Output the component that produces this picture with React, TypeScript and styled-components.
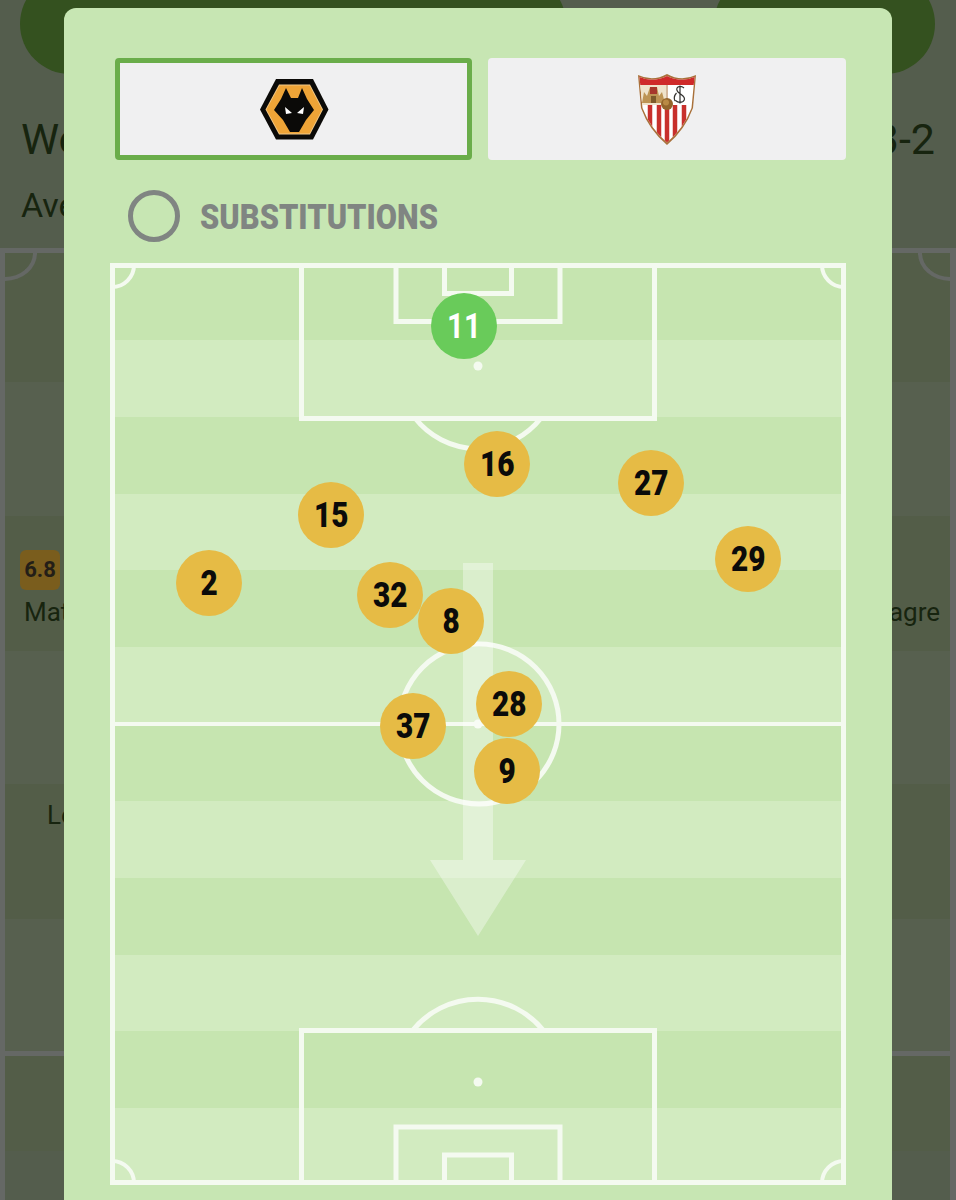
import React from "react";
import styled, { createGlobalStyle } from "styled-components";

const Global = createGlobalStyle`
  html, body { margin: 0; padding: 0; background: #545d4d; }
  body { font-family: Roboto, "Liberation Sans", sans-serif; }
`;

const Screen = styled.div`
  position: relative;
  width: 956px;
  height: 1200px;
  overflow: hidden;
  background: #545d4d;
`;

const TopBar = styled.div`
  display: flex;
  justify-content: space-between;
  height: 74px;
  padding: 0 21px 0 20px;
`;

const Pill = styled.div<{ $w: number }>`
  width: ${(p) => p.$w}px;
  height: 100px;
  margin-top: -26px;
  border-radius: 50px;
  background: #34511f;
`;

const TitleRow = styled.div`
  display: flex;
  justify-content: space-between;
  margin-top: 39px;
  padding: 0 21px;
  color: #17240f;
  font-size: 43px;
  line-height: 52px;
`;

const SubTitle = styled.div`
  width: 80px;
  margin-top: 20px;
  margin-left: 21px;
  overflow: hidden;
  white-space: nowrap;
  color: #17240f;
  font-size: 34px;
  line-height: 40px;
`;

const BackPitch = styled.div`
  position: relative;
  margin-top: 23px;
  height: 960px;
  display: flex;
  flex-direction: column;
  border: solid #656865;
  border-width: 5px 6px 0 5px;
  box-sizing: border-box;
`;

const BackCorner = styled.span<{ $right?: boolean }>`
  position: absolute;
  top: 0;
  ${(p) => (p.$right ? "right: 0;" : "left: 0;")}
  width: 32px;
  height: 28px;
  box-sizing: border-box;
  border: solid #656865;
  border-width: ${(p) => (p.$right ? "0 0 4px 4px" : "0 4px 4px 0")};
  ${(p) => (p.$right ? "border-bottom-left-radius: 100%;" : "border-bottom-right-radius: 100%;")}
`;

const BackStripe = styled.div<{ $h: number; $light?: boolean; $line?: boolean }>`
  height: ${(p) => p.$h}px;
  flex: none;
  box-sizing: border-box;
  background: ${(p) => (p.$light ? "#57604f" : "#535d48")};
  ${(p) => (p.$line ? "border-top: 5px solid #656865;" : "")}
  display: flex;
  justify-content: space-between;
  padding: 0 10px 0 15px;
  color: #17240f;
  font-size: 26px;
  line-height: 30px;
`;

const Rating = styled.div`
  width: 40px;
  height: 40px;
  border-radius: 6px;
  background: #7a5d1d;
  color: #241e17;
  font-weight: 700;
  font-size: 22px;
  line-height: 40px;
  text-align: center;
`;

const BackName = styled.div<{ $top: number; $left: number }>`
  margin-top: ${(p) => p.$top}px;
  margin-left: ${(p) => p.$left}px;
  white-space: nowrap;
`;

const RatedPlayer = styled.div`
  margin-top: 34px;
`;

const Modal = styled.div`
  position: absolute;
  top: 8px;
  left: 64px;
  width: 828px;
  height: 1230px;
  box-sizing: border-box;
  padding: 50px 46px 0;
  background: #c7e6b3;
  border-radius: 12px;
`;

const Tabs = styled.div`
  display: grid;
  grid-template-columns: 357px 358px;
  gap: 16px;
  margin-left: 5px;
`;

const Tab = styled.div<{ $active?: boolean }>`
  height: 102px;
  box-sizing: border-box;
  display: flex;
  align-items: center;
  justify-content: center;
  background: #f0f0f1;
  border-radius: 4px;
  border: ${(p) => (p.$active ? "5px solid #6aad4a" : "none")};
`;

const SubRow = styled.div`
  display: flex;
  align-items: center;
  gap: 20px;
  height: 52px;
  margin: 30px 0 0 18px;
`;

const Radio = styled.div`
  width: 52px;
  height: 52px;
  box-sizing: border-box;
  border: 5px solid #808582;
  border-radius: 50%;
`;

const SubLabel = styled.span`
  display: inline-block;
  margin-top: 3px;
  color: #808582;
  font-weight: 900;
  font-size: 35px;
  line-height: 40px;
  transform: scaleX(0.88);
  transform-origin: left center;
  white-space: nowrap;
`;

const Pitch = styled.div`
  position: relative;
  width: 736px;
  height: 922px;
  margin-top: 21px;
  display: grid;
  grid-template-rows: repeat(12, 1fr);
`;

const Stripe = styled.div<{ $light: boolean }>`
  background: ${(p) => (p.$light ? "#d2ebc0" : "#c6e5b0")};
`;

const Lines = styled.svg`
  position: absolute;
  inset: 0;
  width: 736px;
  height: 922px;
`;

const Player = styled.div<{ $x: number; $y: number; $sub?: boolean }>`
  position: absolute;
  left: ${(p) => p.$x - 110 - 33}px;
  top: ${(p) => p.$y - 263 - 33}px;
  width: 66px;
  height: 66px;
  border-radius: 50%;
  background: ${(p) => (p.$sub ? "#69cb5a" : "#e6bb45")};
  color: ${(p) => (p.$sub ? "#ffffff" : "#0b0b0a")};
  font-weight: ${(p) => (p.$sub ? 700 : 900)};
  display: flex;
  align-items: center;
  justify-content: center;
`;

const Num = styled.span`
  display: inline-block;
  font-size: 35px;
  line-height: 1;
  transform: scaleX(0.85);
`;

const players = [
  { n: 16, x: 497, y: 464 },
  { n: 27, x: 651, y: 483 },
  { n: 15, x: 331, y: 515 },
  { n: 29, x: 748, y: 559 },
  { n: 2, x: 209, y: 583 },
  { n: 32, x: 390, y: 595 },
  { n: 8, x: 451, y: 621 },
  { n: 28, x: 509, y: 704 },
  { n: 37, x: 413, y: 726 },
  { n: 9, x: 507, y: 771 },
];

const WolvesLogo = () => (
  <svg width="70" height="62" viewBox="19 8 70 62">
    <polygon points="20,39.5 36,9 73,9 88.5,39.5 73,69.5 36,69.5" fill="#0b0a08" />
    <polygon points="25.5,39.5 39,14.5 70,14.5 83,39.5 70,64.5 39,64.5" fill="#f2c988" />
    <polygon points="26.5,39.5 39.5,15.5 69.5,15.5 82,39.5 69.5,63.5 39.5,63.5" fill="#eea437" />
    <path d="M46 18 L51 28 L58 28 L62 18 L67 29 L74 40 L66 50 L59 62 L50 62 L43 50 L34 40 L41 29 Z" fill="#0b0a08" />
    <path d="M45 37 L52 43 L46 44 Z M64 37 L57 43 L63 44 Z" fill="#fff" />
  </svg>
);

const SevillaLogo = () => (
  <svg width="60" height="72" viewBox="37 23 60 72">
    <defs>
      <clipPath id="crest">
        <path d="M39.5 27 Q53 33 67 26 Q81 33 94.5 27 L91.5 58 Q84 78 67 92.5 Q50 78 42.5 58 Z" />
      </clipPath>
    </defs>
    <path d="M38 25 Q53 32 67 24 Q81 32 96 25 L93 58 Q85 80 67 95 Q49 80 41 58 Z" fill="#a9713b" />
    <g clipPath="url(#crest)">
      <rect x="37" y="25" width="60" height="72" fill="#fff" />
      <rect x="37" y="25" width="60" height="10" fill="#cf2a2a" />
      <rect x="40" y="35" width="26" height="20" fill="#efe3cb" />
      {[50, 59, 67, 75, 84].map((x) => (
        <rect key={x} x={x - 2.25} y="55" width="4.5" height="42" fill="#c8302c" />
      ))}
    </g>
    <line x1="67" y1="35" x2="67" y2="55" stroke="#a9713b" strokeWidth="1" />
    <path d="M42 53 L44 42 L47 46 L50 37 L57 37 L59 46 L62 42 L65 53 Z" fill="#bd9454" />
    <rect x="50" y="37" width="7" height="7" fill="#a6372c" />
    <rect x="51" y="46" width="5" height="7" fill="#7c5a2a" />
    <path d="M84 38 Q81 35.5 78 37 Q75.5 39 78 42 L83 46 Q86 49 83 51.5 Q79 53.5 75.5 50.5 M80 35.5 L80 53.5 M76.5 43 Q73 47 75 51" fill="none" stroke="#33312f" strokeWidth="1.2" />
    <circle cx="67" cy="54" r="6" fill="#93652a" />
    <circle cx="66" cy="52.5" r="3" fill="#b98a44" />
  </svg>
);

export default function App() {
  return (
    <>
      <Global />
      <Screen>
        <TopBar>
          <Pill $w={546} />
          <Pill $w={221} />
        </TopBar>
        <TitleRow>
          <span>Wolves</span>
          <span>5-3-2</span>
        </TitleRow>
        <SubTitle>Average positions</SubTitle>
        <BackPitch>
          <BackStripe $h={129} />
          <BackStripe $h={134} $light />
          <BackStripe $h={135}>
            <RatedPlayer>
              <Rating>6.8</Rating>
              <BackName $top={7} $left={4}>Matt Doherty</BackName>
            </RatedPlayer>
            <BackName $top={81} $left={0}>Vinagre</BackName>
          </BackStripe>
          <BackStripe $h={133} $light />
          <BackStripe $h={135}>
            <BackName $top={16} $left={27}>Leander Dendoncker</BackName>
          </BackStripe>
          <BackStripe $h={132} $light />
          <BackStripe $h={100} $line />
          <BackCorner />
          <BackCorner $right />
        </BackPitch>

        <Modal>
          <Tabs>
            <Tab $active><WolvesLogo /></Tab>
            <Tab><SevillaLogo /></Tab>
          </Tabs>
          <SubRow>
            <Radio />
            <SubLabel>SUBSTITUTIONS</SubLabel>
          </SubRow>
          <Pitch>
            {Array.from({ length: 12 }, (_, i) => (
              <Stripe key={i} $light={i % 2 === 1} />
            ))}
            <Lines viewBox="0 0 736 922">
              <g fill="none" stroke="#f4faf0" strokeWidth="5">
                <rect x="2.5" y="2.5" width="731" height="917" />
                <line x1="2" y1="461" x2="734" y2="461" strokeWidth="4" />
                <circle cx="369" cy="461" r="80" />
                <rect x="191.5" y="2.5" width="353" height="153" />
                <rect x="286" y="2.5" width="164" height="56" />
                <rect x="334.5" y="2.5" width="67" height="28" />
                <path d="M305 155 A 80 80 0 0 0 431 155" />
                <rect x="191.5" y="767.5" width="353" height="152" />
                <rect x="286" y="864" width="164" height="56" />
                <rect x="334.5" y="892" width="67" height="28" />
                <path d="M303 767 A 84 84 0 0 1 433 767" />
                <path d="M2 24 A 22 22 0 0 0 24 2" strokeWidth="4" />
                <path d="M712 2 A 22 22 0 0 0 734 24" strokeWidth="4" />
                <path d="M2 898 A 22 22 0 0 1 24 920" strokeWidth="4" />
                <path d="M712 920 A 22 22 0 0 1 734 898" strokeWidth="4" />
              </g>
              <circle cx="368" cy="103" r="4.5" fill="#f4faf0" />
              <circle cx="368" cy="819" r="4.5" fill="#f4faf0" />
              <circle cx="368" cy="461" r="4.5" fill="#f4faf0" />
              <path d="M353 300 H383 V597 H416 L368 673 L320 597 H353 Z" fill="#ffffff" fillOpacity="0.36" />
            </Lines>
            <Player $x={464} $y={326} $sub><Num>11</Num></Player>
            {players.map((p) => (
              <Player key={p.n} $x={p.x} $y={p.y}><Num>{p.n}</Num></Player>
            ))}
          </Pitch>
        </Modal>
      </Screen>
    </>
  );
}
